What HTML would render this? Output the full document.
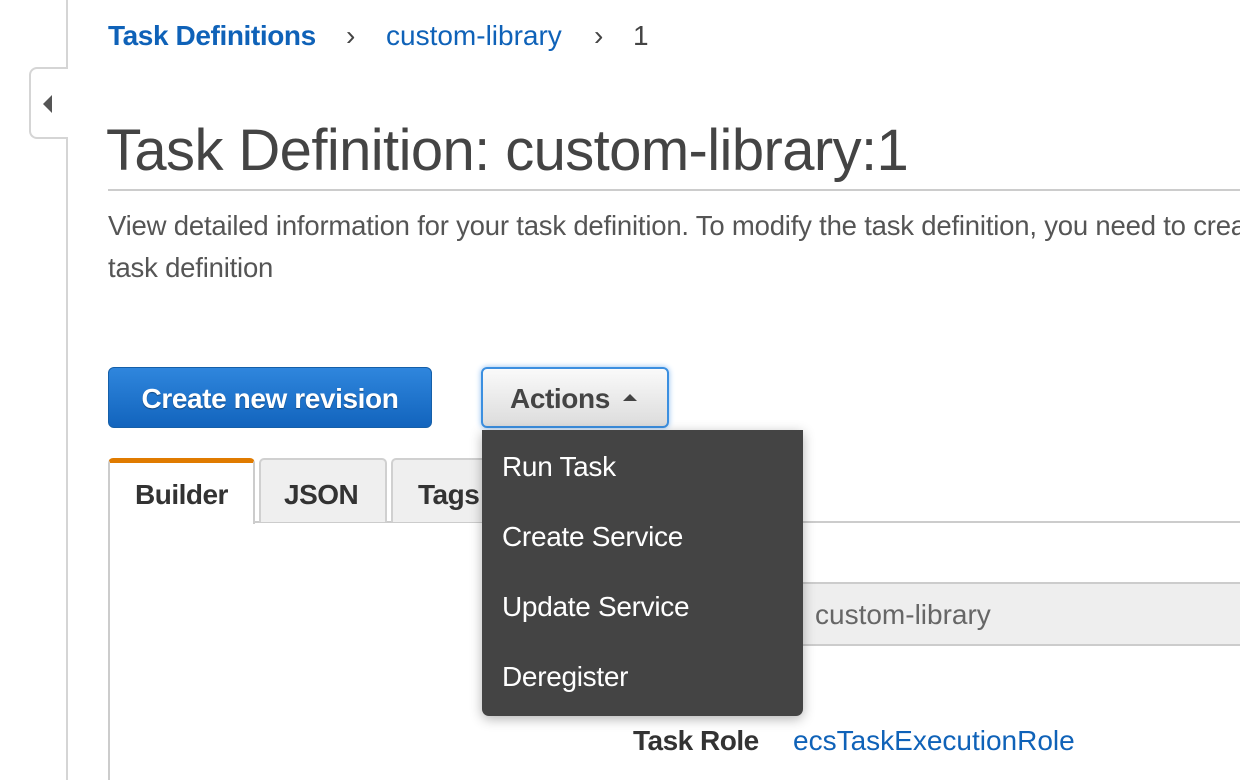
<!DOCTYPE html>
<html><head><style>
*{margin:0;padding:0;box-sizing:border-box}
body{width:1240px;height:780px;overflow:hidden;background:#fff;font-family:"Liberation Sans",Arial,sans-serif;position:relative}
.a{position:absolute;white-space:nowrap}
</style></head><body>
<div class="a" style="left:66px;top:0;width:2px;height:780px;background:#d5d5d5"></div>
<div class="a" style="left:29px;top:67px;width:39px;height:72px;background:#fff;border:2px solid #d5d5d5;border-right:none;border-radius:8px 0 0 8px"></div>
<div class="a" style="left:43px;top:95px;width:0;height:0;border-top:9px solid transparent;border-bottom:9px solid transparent;border-right:9px solid #555"></div>

<div class="a" style="left:108px;top:20px;font-size:28px;font-weight:bold;color:#0f62b8;letter-spacing:-0.4px">Task Definitions</div>
<div class="a" style="left:346px;top:20px;font-size:28px;color:#444">›</div>
<div class="a" style="left:386px;top:20px;font-size:28px;color:#0f62b8">custom-library</div>
<div class="a" style="left:594px;top:20px;font-size:28px;color:#444">›</div>
<div class="a" style="left:633px;top:20px;font-size:28px;color:#444">1</div>

<div class="a" style="left:106px;top:117px;font-size:58px;color:#444;letter-spacing:-0.6px">Task Definition: custom-library:1</div>
<div class="a" style="left:108px;top:189px;width:1132px;height:2px;background:#ccc"></div>
<div class="a" style="left:108px;top:205px;width:1132px;overflow:hidden;font-size:27.5px;color:#555;line-height:42px;letter-spacing:-0.2px">View detailed information for your task definition. To modify the task definition, you need to create a new revision of this<br>task definition</div>

<div class="a" style="left:108px;top:367px;width:324px;height:61px;border-radius:6px;background:linear-gradient(#2f86dd,#1264bd);border:1px solid #155fa8;color:#fff;font-size:28px;font-weight:bold;text-align:center;line-height:61px;letter-spacing:-0.4px;text-shadow:0 1px 1px rgba(0,0,0,.4)">Create new revision</div>
<div class="a" style="left:481px;top:367px;width:188px;height:61px;border-radius:6px;background:linear-gradient(#fafafa,#dcdcdc);border:2px solid #3b8fe0;box-shadow:0 0 6px #8bbcf0;color:#444;font-size:28px;font-weight:bold;line-height:59px;padding-left:27px;letter-spacing:-0.4px">Actions <span style="display:inline-block;width:0;height:0;border-left:7px solid transparent;border-right:7px solid transparent;border-bottom:7px solid #444;vertical-align:middle;margin-left:6px;margin-top:-6px"></span></div>

<div class="a" style="left:108px;top:521px;width:1132px;height:2px;background:#ccc"></div>
<div class="a" style="left:108px;top:522px;width:2px;height:258px;background:#ccc"></div>
<div class="a" style="left:108px;top:458px;width:147px;height:66px;background:#fff;border:2px solid #ccc;border-bottom:none;border-top:5px solid #e07b00;border-radius:5px 5px 0 0;font-size:28px;font-weight:bold;color:#333;padding:16px 0 0 25px;letter-spacing:-0.5px">Builder</div>
<div class="a" style="left:259px;top:458px;width:128px;height:64px;background:#efefef;border:2px solid #d0d0d0;border-bottom:none;border-radius:5px 5px 0 0;font-size:28px;font-weight:bold;color:#333;padding:19px 0 0 23px;letter-spacing:-0.5px">JSON</div>
<div class="a" style="left:391px;top:458px;width:120px;height:64px;background:#efefef;border:2px solid #d0d0d0;border-bottom:none;border-radius:5px 5px 0 0;font-size:28px;font-weight:bold;color:#333;padding:19px 0 0 25px;letter-spacing:-0.5px">Tags</div>

<div class="a" style="left:800px;top:582px;width:440px;height:64px;background:#eee;border-top:2px solid #ccc;border-bottom:2px solid #ccc"></div>
<div class="a" style="left:815px;top:599px;font-size:28px;color:#666">custom-library</div>
<div class="a" style="left:633px;top:725px;font-size:28px;font-weight:bold;color:#333;letter-spacing:-0.5px">Task Role</div>
<div class="a" style="left:793px;top:725px;font-size:28px;color:#0f62b8">ecsTaskExecutionRole</div>

<div class="a" style="left:482px;top:430px;width:321px;height:286px;background:#444;border-radius:0 0 7px 7px;box-shadow:0 3px 12px rgba(0,0,0,.3)"></div>
<div class="a" style="left:502px;top:451px;font-size:28px;color:#fff;letter-spacing:-0.3px">Run Task</div>
<div class="a" style="left:502px;top:521px;font-size:28px;color:#fff;letter-spacing:-0.3px">Create Service</div>
<div class="a" style="left:502px;top:591px;font-size:28px;color:#fff;letter-spacing:-0.3px">Update Service</div>
<div class="a" style="left:502px;top:661px;font-size:28px;color:#fff;letter-spacing:-0.3px">Deregister</div>
</body></html>
